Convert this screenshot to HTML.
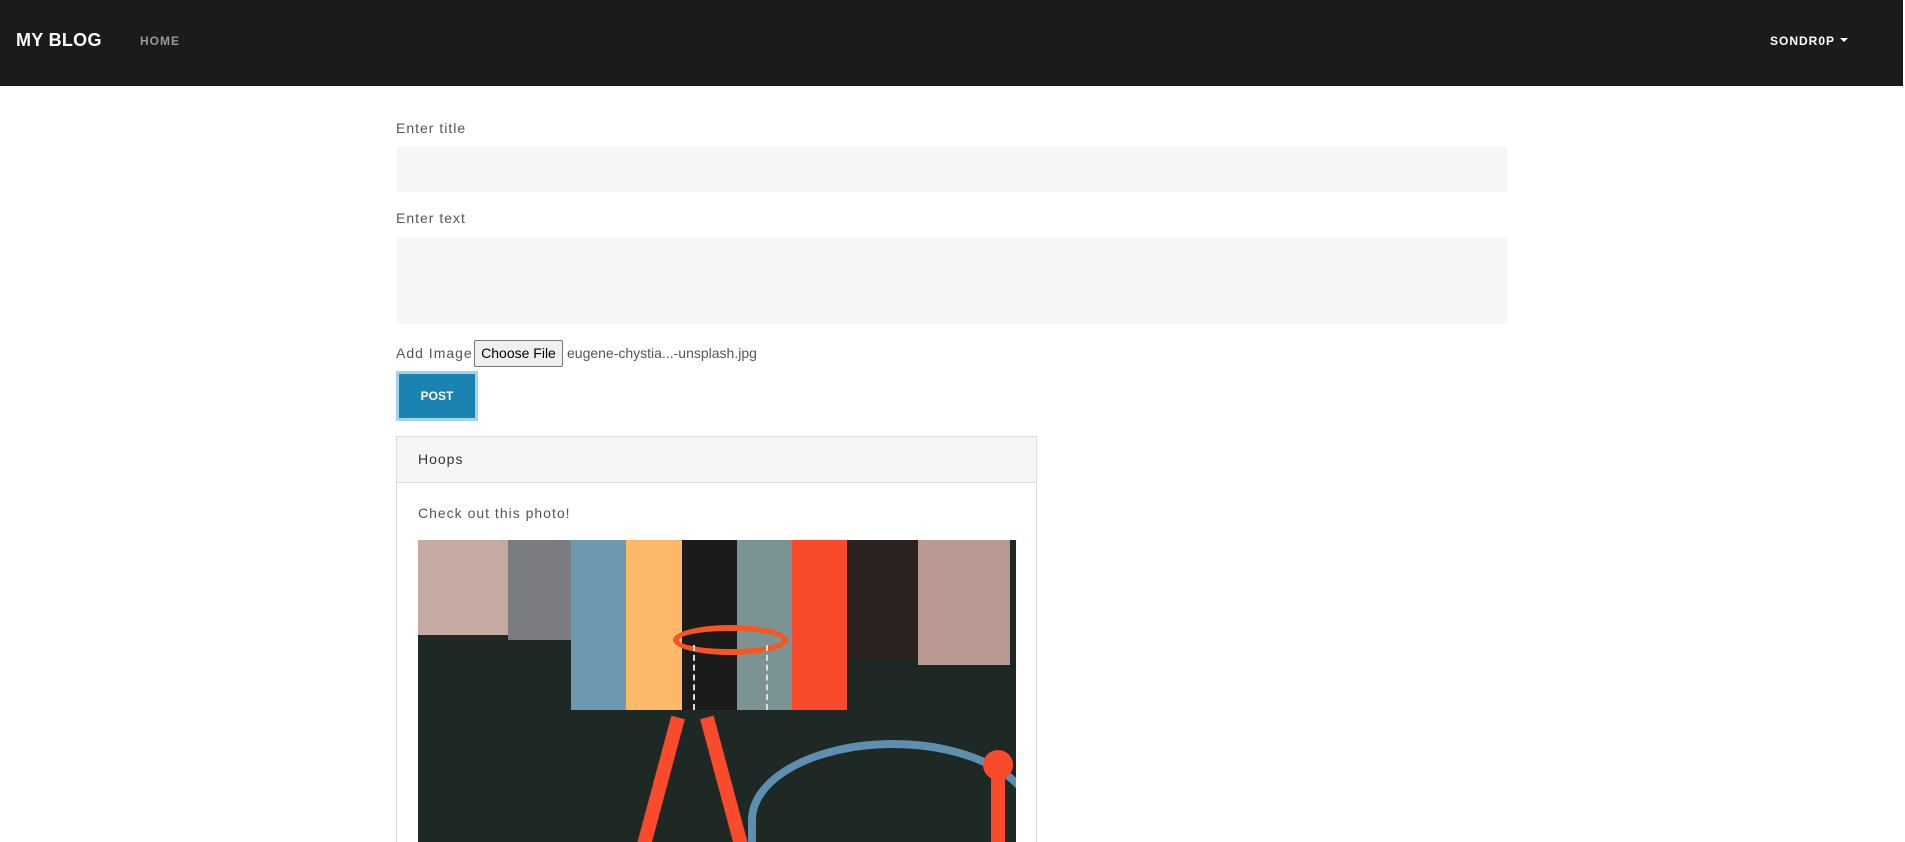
<!DOCTYPE html>
<html><head><meta charset="utf-8"><style>
*{box-sizing:border-box;margin:0;padding:0}
html,body{width:1905px;height:842px;overflow:hidden}
body{background:#fff;font-family:"Liberation Sans",sans-serif;color:#555;position:relative}
.nav{position:absolute;left:0;top:0;width:1903px;height:86px;background:#1b1b1b}
.brand{position:absolute;left:16px;top:30px;color:#fff;font-size:18px;letter-spacing:.3px;font-weight:bold}
.home{position:absolute;left:140px;top:34px;color:#999;font-size:12px;letter-spacing:1px;font-weight:bold}
.user{position:absolute;left:1770px;top:34px;color:#fff;font-size:12px;letter-spacing:1px;font-weight:bold}
.user:after{content:"";display:inline-block;margin-left:5px;vertical-align:3px;border-left:4px solid transparent;border-right:4px solid transparent;border-top:4px solid #fff}
.lbl{position:absolute;left:396px;font-size:14px;letter-spacing:1px;color:#555}
.inp{position:absolute;left:397px;width:1110px;background:#f6f6f7}
.cf{position:absolute;left:474px;top:340px;width:89px;height:27px;border:1px solid #767676;border-radius:2px;background:#efefef;color:#000;font-size:14px;text-align:center;line-height:25px}
.fn{position:absolute;left:567px;top:345px;font-size:14px;color:#555}
.post{position:absolute;left:396px;top:371px;width:82px;height:50px;background:#1a83b1;border:3px solid #a3d4ea;color:#fff;font-size:12px;font-weight:bold;text-align:center;line-height:44px}
.card{position:absolute;left:396px;top:436px;width:641px;height:406px;border:1px solid #ddd;border-bottom:none}
.ch{height:46px;background:#f6f6f6;border-bottom:1px solid #ddd;padding:14px 0 0 21px;font-size:14px;letter-spacing:1px;color:#333}
.b{position:absolute}
</style></head><body>
<div class="nav"><div class="brand">MY BLOG</div><div class="home">HOME</div><div class="user">SONDR0P</div></div>
<div class="lbl" style="top:120px">Enter title</div>
<div class="inp" style="top:147px;height:45px"></div>
<div class="lbl" style="top:210px">Enter text</div>
<div class="inp" style="top:237px;height:87px"></div>
<div class="lbl" style="top:345px">Add Image</div>
<div class="cf">Choose File</div>
<div class="fn">eugene-chystia...-unsplash.jpg</div>
<div class="post">POST</div>
<div class="card"><div class="ch">Hoops</div>
<div style="padding:22px 0 0 21px;font-size:14px;letter-spacing:1px">Check out this photo!</div></div>
<div class="b" style="left:418px;top:540px;width:598px;height:302px;background:#1e2824;overflow:hidden">
 <div class="b" style="left:0;top:0;width:153px;height:95px;background:#c5aaa3"></div>
 <div class="b" style="left:90px;top:0;width:63px;height:100px;background:#7a7c80"></div>
 <div class="b" style="left:428px;top:0;width:72px;height:120px;background:#2a2320"></div>
 <div class="b" style="left:500px;top:0;width:92px;height:125px;background:#b99a92"></div>
 <div class="b" style="left:153px;top:0;width:55px;height:170px;background:#6c98b0"></div>
 <div class="b" style="left:208px;top:0;width:56px;height:170px;background:#fcb96a"></div>
 <div class="b" style="left:264px;top:0;width:55px;height:170px;background:#1b1b1b"></div>
 <div class="b" style="left:319px;top:0;width:55px;height:170px;background:#7c9394"></div>
 <div class="b" style="left:374px;top:0;width:55px;height:170px;background:#f94b2c"></div>
 <div class="b" style="left:255px;top:85px;width:115px;height:30px;border:6px solid #f8561f;border-radius:50%"></div>
 <div class="b" style="left:275px;top:105px;width:75px;height:65px;border-left:2px dashed #ddd;border-right:2px dashed #ddd"></div>
 <div class="b" style="left:235px;top:175px;width:14px;height:140px;background:#f94b2c;transform:rotate(15deg)"></div>
 <div class="b" style="left:300px;top:175px;width:14px;height:140px;background:#f94b2c;transform:rotate(-15deg)"></div>
 <div class="b" style="left:330px;top:200px;width:290px;height:160px;border:8px solid #5f8fae;border-radius:50% 50% 0 0;border-bottom:none"></div>
 <div class="b" style="left:565px;top:210px;width:30px;height:30px;border-radius:50%;background:#f94b2c"></div>
 <div class="b" style="left:573px;top:230px;width:14px;height:80px;background:#f94b2c"></div>
</div>
</body></html>
